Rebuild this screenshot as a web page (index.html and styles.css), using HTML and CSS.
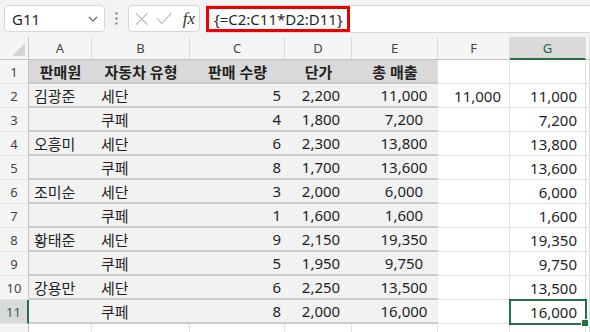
FILE: index.html
```html
<!DOCTYPE html>
<html lang="ko">
<head>
    <meta charset="UTF-8">
    <title>판매 시트</title>
    <link rel="stylesheet" href="styles.css">
</head>
<body>
    <!-- Formula bar -->
    <div class="formula-bar">
        <div class="name-box">
            <span>G11</span>
            <svg class="chevron" width="10" height="6" viewBox="0 0 10 6"><path d="M1 1 L5 5 L9 1" fill="none" stroke="#666" stroke-width="1.2"/></svg>
        </div>
        <svg class="grip" width="3" height="13" viewBox="0 0 3 13"><circle cx="1.5" cy="1.5" r="1.2" fill="#888"/><circle cx="1.5" cy="6.5" r="1.2" fill="#888"/><circle cx="1.5" cy="11.5" r="1.2" fill="#888"/></svg>
        <div class="fx-box">
            <svg width="14" height="14" viewBox="0 0 14 14"><path d="M1 1 L13 13 M13 1 L1 13" stroke="#bdbdbd" stroke-width="1.2"/></svg>
            <svg width="17" height="13" viewBox="0 0 17 13"><path d="M1 6 L6 11.5 L16 1" fill="none" stroke="#bdbdbd" stroke-width="1.2"/></svg>
            <span class="fx">fx</span>
        </div>
        <div class="formula-input">
            <span class="formula-text">{=C2:C11*D2:D11}</span>
        </div>
    </div>

    <!-- Sheet -->
    <div class="sheet">
        <div class="row col-heads">
            <div class="corner"></div>
            <div class="ch">A</div><div class="ch">B</div><div class="ch">C</div><div class="ch">D</div>
            <div class="ch">E</div><div class="ch">F</div><div class="ch active">G</div><div class="ch"></div>
        </div>

        <div class="row head">
            <div class="rh">1</div>
            <div class="t">판매원</div><div class="t">자동차 유형</div><div class="t">판매 수량</div><div class="t">단가</div><div class="t">총 매출</div>
            <div class="c"></div><div class="c"></div><div class="c last"></div>
        </div>
        <div class="row">
            <div class="rh">2</div>
            <div class="t a">김광준</div><div class="t b">세단</div><div class="t n">5</div><div class="t d">2,200</div><div class="t e">11,000</div>
            <div class="c n">11,000</div><div class="c n">11,000</div><div class="c last"></div>
        </div>
        <div class="row">
            <div class="rh">3</div>
            <div class="t a"></div><div class="t b">쿠페</div><div class="t n">4</div><div class="t d">1,800</div><div class="t e">7,200</div>
            <div class="c"></div><div class="c n">7,200</div><div class="c last"></div>
        </div>
        <div class="row">
            <div class="rh">4</div>
            <div class="t a">오흥미</div><div class="t b">세단</div><div class="t n">6</div><div class="t d">2,300</div><div class="t e">13,800</div>
            <div class="c"></div><div class="c n">13,800</div><div class="c last"></div>
        </div>
        <div class="row">
            <div class="rh">5</div>
            <div class="t a"></div><div class="t b">쿠페</div><div class="t n">8</div><div class="t d">1,700</div><div class="t e">13,600</div>
            <div class="c"></div><div class="c n">13,600</div><div class="c last"></div>
        </div>
        <div class="row">
            <div class="rh">6</div>
            <div class="t a">조미순</div><div class="t b">세단</div><div class="t n">3</div><div class="t d">2,000</div><div class="t e">6,000</div>
            <div class="c"></div><div class="c n">6,000</div><div class="c last"></div>
        </div>
        <div class="row">
            <div class="rh">7</div>
            <div class="t a"></div><div class="t b">쿠페</div><div class="t n">1</div><div class="t d">1,600</div><div class="t e">1,600</div>
            <div class="c"></div><div class="c n">1,600</div><div class="c last"></div>
        </div>
        <div class="row">
            <div class="rh">8</div>
            <div class="t a">황태준</div><div class="t b">세단</div><div class="t n">9</div><div class="t d">2,150</div><div class="t e">19,350</div>
            <div class="c"></div><div class="c n">19,350</div><div class="c last"></div>
        </div>
        <div class="row">
            <div class="rh">9</div>
            <div class="t a"></div><div class="t b">쿠페</div><div class="t n">5</div><div class="t d">1,950</div><div class="t e">9,750</div>
            <div class="c"></div><div class="c n">9,750</div><div class="c last"></div>
        </div>
        <div class="row">
            <div class="rh">10</div>
            <div class="t a">강용만</div><div class="t b">세단</div><div class="t n">6</div><div class="t d">2,250</div><div class="t e">13,500</div>
            <div class="c"></div><div class="c n">13,500</div><div class="c last"></div>
        </div>
        <div class="row">
            <div class="rh active">11</div>
            <div class="t a"></div><div class="t b">쿠페</div><div class="t n">8</div><div class="t d">2,000</div><div class="t e">16,000</div>
            <div class="c"></div><div class="c n selected">16,000</div><div class="c last"></div>
        </div>
        <div class="row">
            <div class="rh"></div>
            <div class="c"></div><div class="c"></div><div class="c"></div><div class="c"></div><div class="c"></div>
            <div class="c"></div><div class="c"></div><div class="c last"></div>
        </div>
    </div>
</body>
</html>
```

FILE: styles.css
```css
* {
    margin: 0;
    padding: 0;
    box-sizing: border-box;
}

body {
    font-family: "Noto Sans", "Noto Sans CJK KR", sans-serif;
    background-color: #ffffff;
    color: #1f1f1f;
    overflow: hidden;
}

/* Formula bar */
.formula-bar {
    display: flex;
    align-items: center;
    height: 37px;
    padding: 0 0 0 4px;
    background-color: #f3f3f3;
}

.name-box {
    display: flex;
    align-items: center;
    justify-content: space-between;
    width: 101px;
    height: 27px;
    padding: 0 6px 0 7px;
    background-color: #ffffff;
    border: 1px solid #d6d6d6;
    border-radius: 4px;
    font-size: 15px;
}

.grip {
    margin: 0 10px;
}

.fx-box {
    display: flex;
    align-items: center;
    width: 72px;
    height: 27px;
    padding: 0 4px 0 6px;
    gap: 8px;
    background-color: #ffffff;
    border: 1px solid #d6d6d6;
    border-radius: 4px;
}

.fx {
    font-family: "Liberation Serif", serif;
    font-style: italic;
    font-size: 17px;
    color: #333333;
    margin-left: 2px;
}

.formula-input {
    flex: 1;
    height: 28px;
    margin-left: 6px;
    background-color: #ffffff;
    border-top: 1px solid #d6d6d6;
    border-bottom: 1px solid #d6d6d6;
}

.formula-text {
    display: inline-flex;
    align-items: center;
    height: 100%;
    padding: 0 4px 0 5px;
    border: 3px solid #ee0000;
    font-size: 15px;
}

/* Sheet grid */
.row {
    display: grid;
    grid-template-columns: 29px 63px 98px 95px 67px 86px 72px 76px 1fr;
    height: 24px;
    font-size: 15px;
}

.row > div {
    display: flex;
    align-items: center;
    white-space: nowrap;
}

.col-heads {
    height: 23px;
    font-size: 13px;
    color: #444444;
    background-color: #f5f5f5;
    border-bottom: 1px solid #c4c4c4;
}

.corner {
    position: relative;
    border-right: 1px solid #c4c4c4;
}

.corner::after {
    content: "";
    position: absolute;
    right: 3px;
    bottom: 3px;
    border-left: 13px solid transparent;
    border-bottom: 13px solid #d4d4d4;
}

.ch {
    justify-content: center;
    border-right: 1px solid #dcdcdc;
}

.ch.active {
    background-color: #dadada;
    color: #1e6b41;
    border-bottom: 2px solid #217346;
    margin-bottom: -1px;
}

.rh {
    justify-content: center;
    font-size: 13px;
    color: #444444;
    background-color: #f5f5f5;
    border-right: 1px solid #c4c4c4;
    border-bottom: 1px solid #e1e1e1;
}

.rh.active {
    background-color: #dadada;
    color: #1e6b41;
    border-right: 2px solid #217346;
}

/* Table cells (A-E) */
.t {
    background-color: #f2f2f2;
    border-bottom: 2px solid #cbcbcb;
}

.head .t {
    justify-content: center;
    font-weight: 700;
    background-color: #d9d9d9;
}

.t.a {
    padding-left: 5px;
}

.t.b {
    padding-left: 9px;
}

.t.n {
    justify-content: flex-end;
    padding-right: 4px;
}

.t.d {
    justify-content: center;
    padding-left: 5px;
}

.t.e {
    justify-content: center;
    padding-left: 18px;
}

/* Plain cells */
.c {
    border-right: 1px solid #e1e1e1;
    border-bottom: 1px solid #e1e1e1;
}

.c.n {
    justify-content: flex-end;
    padding-right: 8px;
}

.c.selected {
    position: relative;
    outline: 2px solid #217346;
    outline-offset: -1px;
}

.c.selected::after {
    content: "";
    position: absolute;
    right: -4px;
    bottom: -4px;
    width: 6px;
    height: 6px;
    background-color: #217346;
    border: 1px solid #ffffff;
}
```
